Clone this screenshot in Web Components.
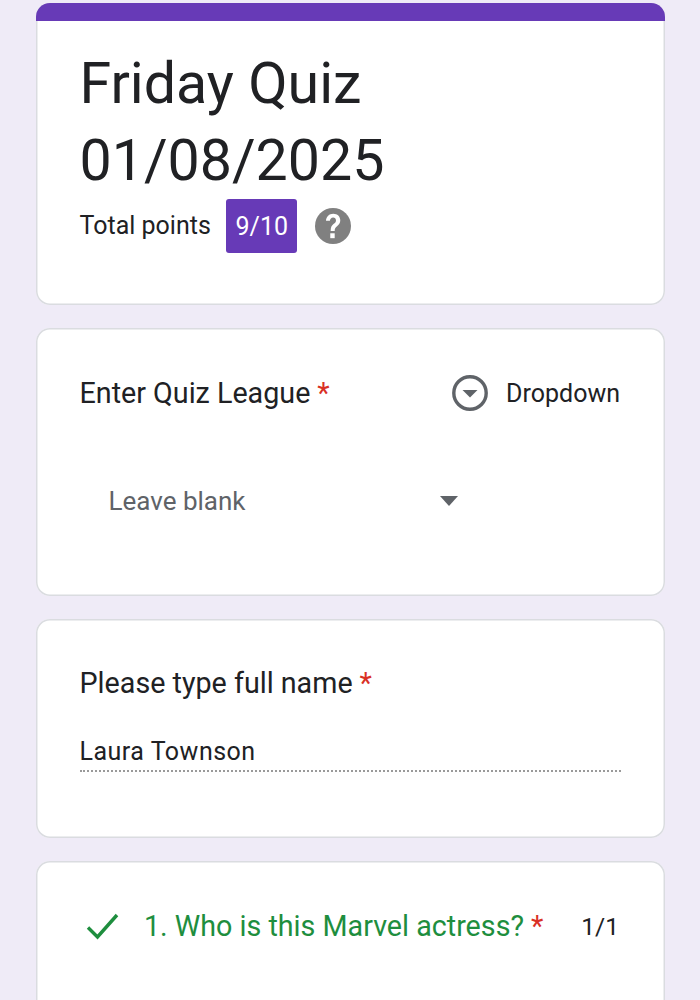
<!DOCTYPE html>
<html><head><meta charset="utf-8">
<style>
html,body{margin:0;padding:0;background:#efebf7;height:1000px;overflow:hidden;}
body{font-family:Roboto,sans-serif;color:#202124;}
quiz-page{display:flex;}
</style></head><body>
<quiz-page>
  <quiz-header title-a="Friday Quiz" title-b="01/08/2025" score="9/10"></quiz-header>
  <quiz-card class="c2" h="268">
    <div slot="head"><q-title req>Enter Quiz League</q-title></div>
    <q-tag slot="side"></q-tag>
    <q-select></q-select>
  </quiz-card>
  <quiz-card h="219" pad="44">
    <div slot="head"><q-title req>Please type full name</q-title></div>
    <q-answer>Laura Townson</q-answer>
  </quiz-card>
  <quiz-card h="200" correct>
    <q-correct slot="head">1. Who is this Marvel actress?</q-correct>
    <q-points slot="side">1/1</q-points>
  </quiz-card>
</quiz-page>
<script>
function def(name,html,init){
  customElements.define(name,class extends HTMLElement{
    connectedCallback(){
      if(this.shadowRoot)return;
      const r=this.attachShadow({mode:'open'});
      r.innerHTML=typeof html==='function'?html(this):html;
    }
  });
}
def('quiz-page',`<style>:host{display:flex;flex-direction:column;gap:23px;padding:3px 35px 0 36px;width:629px;box-sizing:content-box}</style><slot></slot>`);
def('quiz-header',e=>`<style>
:host{display:block;background:#fff;border-radius:14px;height:302px;box-sizing:border-box;overflow:hidden;box-shadow:inset 0 0 0 1.5px #dadce0;flex:none}
.bar{height:18px;background:#673ab7}
.body{padding:24px 44px 0 43.5px}
h1{margin:0;font:400 57.3px/77px Roboto,sans-serif;color:#202124;}
.pts{display:flex;align-items:center;font-size:25px;margin-top:0}
.pts>span:first-child{position:relative;top:-1px}
.badge{background:#673ab7;color:#fff;border-radius:3px;width:71px;height:54px;display:flex;align-items:center;justify-content:center;margin-left:15.5px;font-size:25px}
svg{margin-left:18px;display:block}
</style><div class="bar"></div><div class="body"><h1>${e.getAttribute('title-a')}<br>${e.getAttribute('title-b')}</h1>
<div class="pts"><span>Total points</span><span class="badge">${e.getAttribute('score')}</span>
<svg width="36" height="36" viewBox="0 0 36 36"><circle cx="18" cy="18" r="18" fill="#808080"/><g transform="translate(18 18) scale(1.3 1.4) translate(-18 -18)"><path d="M12.6 14.2c.2-3 2.5-5 5.6-5 3.200 0 5.400 2 5.400 4.700 0 2.100-1.100 3.200-2.500 4.300-1.300 1-1.800 1.600-1.800 3.300h-3.100c0-2.700.8-3.800 2.200-4.900 1.200-.9 1.900-1.500 1.900-2.600 0-1.200-.9-2.100-2.200-2.100-1.400 0-2.300.9-2.500 2.300z" fill="#fff"/><rect x="15.900" y="23.200" width="3.400" height="3.500" fill="#fff"/></g></svg></div></div>`);
def('quiz-card',e=>`<style>
:host{display:block;background:#fff;border-radius:14px;height:${e.getAttribute('h')}px;box-sizing:border-box;box-shadow:inset 0 0 0 1.5px #dadce0;padding:${e.getAttribute('pad')||45}px 44px 0 43.5px;flex:none}
.top{display:flex;justify-content:space-between;align-items:center;min-height:40px}
</style><div class="top"><slot name="head"></slot><slot name="side"></slot></div><slot></slot>`);
def('q-title',`<style>:host{display:block;font-size:28.7px;line-height:40px;color:#202124}i{font-style:normal;color:#d93025;margin-left:7px}</style><slot></slot><i>*</i>`);
def('q-tag',`<style>:host{display:flex;align-items:center;gap:18px;font-size:25px;color:#202124;margin-right:1px}svg{display:block}</style>
<svg width="36" height="36" viewBox="0 0 36 36"><circle cx="18" cy="18" r="16.200" fill="none" stroke="#5f6368" stroke-width="3.400"/><path d="M10.500 15h15L18 22.500z" fill="#5f6368"/></svg><span>Dropdown</span>`);
def('q-select',`<style>:host{display:flex;align-items:center;justify-content:space-between;width:349.5px;margin:68px 0 0 29px;font-size:26px;color:#5f6368;height:40px}svg{display:block}</style><span>Leave blank</span><svg width="18" height="10" viewBox="0 0 18 10"><path d="M0 0h18L9 10z" fill="#5f6368"/></svg>`);
def('q-answer',`<style>:host{display:block;margin-top:29px;font-size:25px;line-height:40px;color:#202124;border-bottom:2px dotted #9a9a9a;height:38px;letter-spacing:.5px}</style><slot></slot>`);
def('q-correct',`<style>:host{display:flex;align-items:center;font-size:28.7px;line-height:40px;color:#1e8e3e}svg{display:block;margin:0 23.5px 0 5px}i{font-style:normal;color:#d93025;margin-left:7px}</style>
<svg width="36" height="28" viewBox="0 0 36 28"><path d="M3 15.500l9.500 9.500L32 3" fill="none" stroke="#1e8e3e" stroke-width="3.400"/></svg><span><slot></slot><i>*</i></span>`);
def('q-points',`<style>:host{display:block;font-size:24.6px;color:#202124;margin-right:2px}</style><slot></slot>`);
</script>
</body></html>
